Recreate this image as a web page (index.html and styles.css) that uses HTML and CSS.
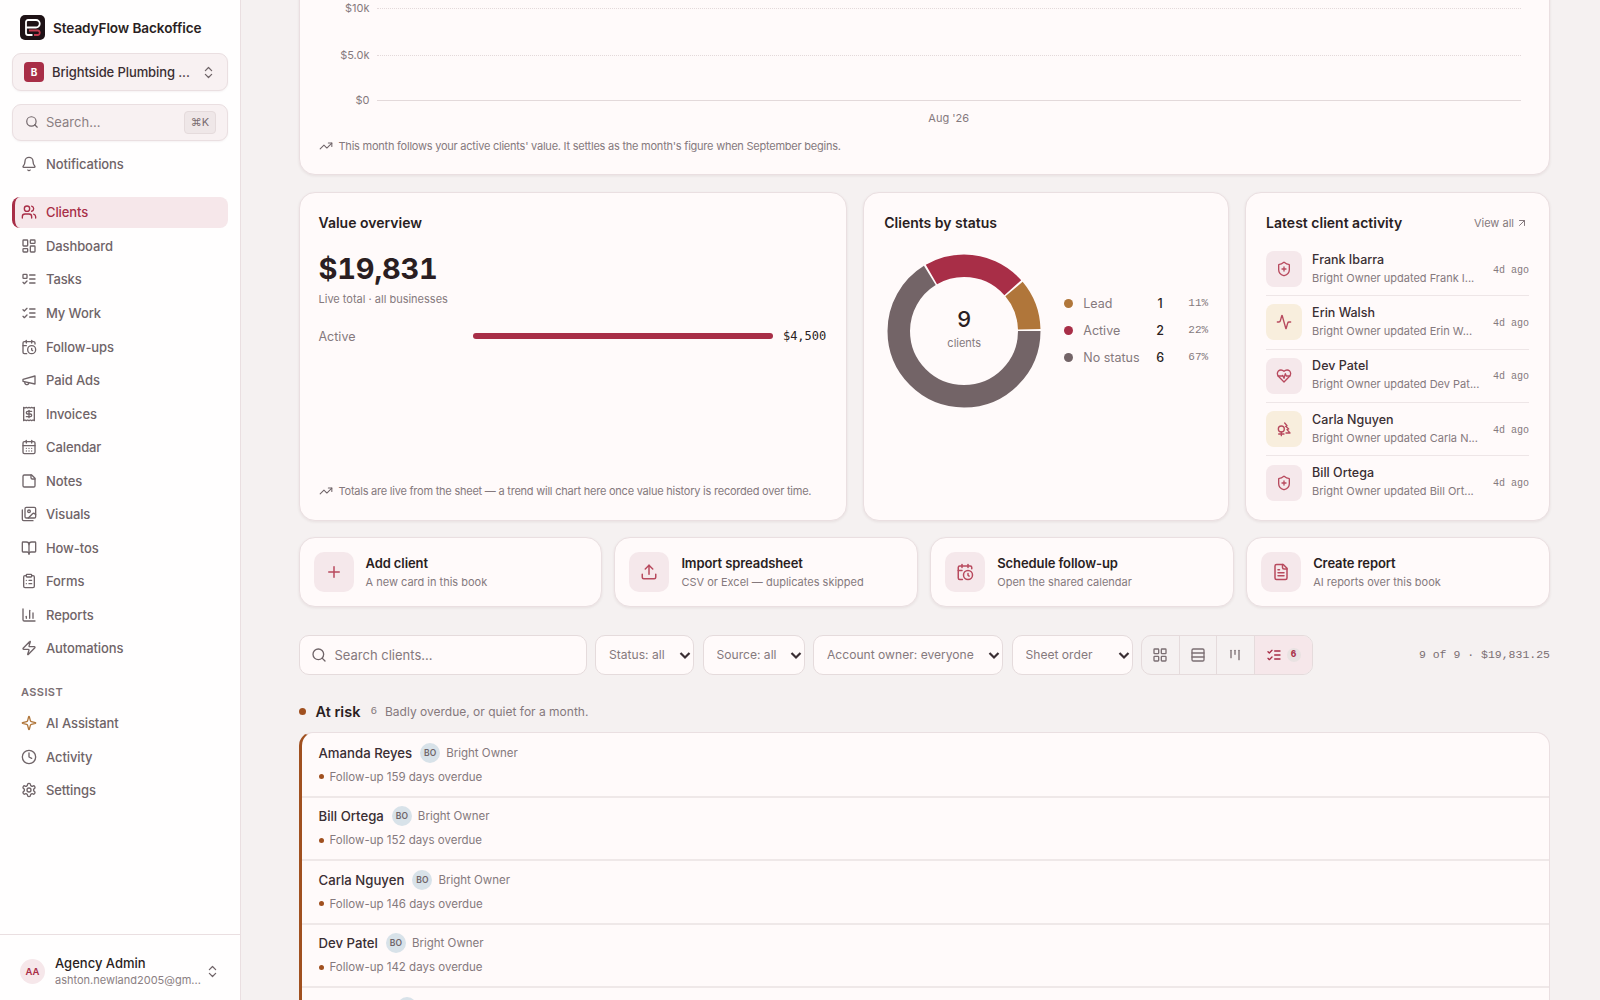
FILE: index.html
```html
<!DOCTYPE html>
<html lang="en">
<head>
    <meta charset="UTF-8">
    <meta name="viewport" content="width=device-width, initial-scale=1.0">
    <title>SteadyFlow Backoffice</title>
    <link rel="stylesheet" href="styles.css">
</head>
<body>
<svg class="sprite" xmlns="http://www.w3.org/2000/svg">
    <symbol id="i-bell" viewBox="0 0 24 24"><path d="M10.268 21a2 2 0 0 0 3.464 0"/><path d="M3.262 15.326A1 1 0 0 0 4 17h16a1 1 0 0 0 .74-1.673C19.41 13.956 18 12.499 18 8A6 6 0 0 0 6 8c0 4.499-1.411 5.956-2.738 7.326"/></symbol>
    <symbol id="i-users" viewBox="0 0 24 24"><path d="M16 21v-2a4 4 0 0 0-4-4H6a4 4 0 0 0-4 4v2"/><circle cx="9" cy="7" r="4"/><path d="M22 21v-2a4 4 0 0 0-3-3.87"/><path d="M16 3.13a4 4 0 0 1 0 7.75"/></symbol>
    <symbol id="i-dash" viewBox="0 0 24 24"><rect x="3" y="3" width="7" height="9" rx="1"/><rect x="14" y="3" width="7" height="5" rx="1"/><rect x="14" y="12" width="7" height="9" rx="1"/><rect x="3" y="16" width="7" height="5" rx="1"/></symbol>
    <symbol id="i-todo" viewBox="0 0 24 24"><rect x="3" y="5" width="6" height="6" rx="1"/><path d="m3 17 2 2 4-4"/><path d="M13 6h8"/><path d="M13 12h8"/><path d="M13 18h8"/></symbol>
    <symbol id="i-checks" viewBox="0 0 24 24"><path d="m3 17 2 2 4-4"/><path d="m3 7 2 2 4-4"/><path d="M13 6h8"/><path d="M13 12h8"/><path d="M13 18h8"/></symbol>
    <symbol id="i-calclock" viewBox="0 0 24 24"><path d="M21 7.5V6a2 2 0 0 0-2-2H5a2 2 0 0 0-2 2v14a2 2 0 0 0 2 2h3.5"/><path d="M16 2v4"/><path d="M8 2v4"/><path d="M3 10h5"/><path d="M17.5 17.5 16 16.3V14"/><circle cx="16" cy="16" r="6"/></symbol>
    <symbol id="i-mega" viewBox="0 0 24 24"><path d="m3 11 18-5v12L3 14v-3z"/><path d="M11.6 16.8a3 3 0 1 1-5.8-1.6"/></symbol>
    <symbol id="i-receipt" viewBox="0 0 24 24"><path d="M4 2v20l2-1 2 1 2-1 2 1 2-1 2 1 2-1 2 1V2l-2 1-2-1-2 1-2-1-2 1-2-1-2 1Z"/><path d="M16 8h-6a2 2 0 1 0 0 4h4a2 2 0 1 1 0 4H8"/><path d="M12 17.5v-11"/></symbol>
    <symbol id="i-cal" viewBox="0 0 24 24"><path d="M8 2v4"/><path d="M16 2v4"/><rect x="3" y="4" width="18" height="18" rx="2"/><path d="M3 10h18"/><path d="M8 14h.01"/><path d="M12 14h.01"/><path d="M16 14h.01"/><path d="M8 18h.01"/><path d="M12 18h.01"/><path d="M16 18h.01"/></symbol>
    <symbol id="i-note" viewBox="0 0 24 24"><path d="M16 3H5a2 2 0 0 0-2 2v14a2 2 0 0 0 2 2h14a2 2 0 0 0 2-2V8Z"/><path d="M15 3v4a2 2 0 0 0 2 2h4"/></symbol>
    <symbol id="i-images" viewBox="0 0 24 24"><path d="M18 22H4a2 2 0 0 1-2-2V6"/><path d="m22 13-1.296-1.296a2.41 2.41 0 0 0-3.408 0L11 18"/><circle cx="12" cy="8" r="2"/><rect x="6" y="2" width="16" height="16" rx="2"/></symbol>
    <symbol id="i-book" viewBox="0 0 24 24"><path d="M12 7v14"/><path d="M3 18a1 1 0 0 1-1-1V4a1 1 0 0 1 1-1h5a4 4 0 0 1 4 4 4 4 0 0 1 4-4h5a1 1 0 0 1 1 1v13a1 1 0 0 1-1 1h-6a3 3 0 0 0-3 3 3 3 0 0 0-3-3z"/></symbol>
    <symbol id="i-clip" viewBox="0 0 24 24"><rect x="8" y="2" width="8" height="4" rx="1"/><path d="M16 4h2a2 2 0 0 1 2 2v14a2 2 0 0 1-2 2H6a2 2 0 0 1-2-2V6a2 2 0 0 1 2-2h2"/><path d="M12 11h4"/><path d="M12 16h4"/><path d="M8 11h.01"/><path d="M8 16h.01"/></symbol>
    <symbol id="i-chart" viewBox="0 0 24 24"><path d="M3 3v16a2 2 0 0 0 2 2h16"/><path d="M18 17V9"/><path d="M13 17V5"/><path d="M8 17v-3"/></symbol>
    <symbol id="i-zap" viewBox="0 0 24 24"><path d="M4 14a1 1 0 0 1-.78-1.63l9.9-10.2a.5.5 0 0 1 .86.46l-1.92 6.02A1 1 0 0 0 13 10h7a1 1 0 0 1 .78 1.63l-9.9 10.2a.5.5 0 0 1-.86-.46l1.92-6.02A1 1 0 0 0 11 14z"/></symbol>
    <symbol id="i-spark" viewBox="0 0 24 24"><path d="M9.937 15.5A2 2 0 0 0 8.5 14.063l-6.135-1.582a.5.5 0 0 1 0-.962L8.5 9.936A2 2 0 0 0 9.937 8.5l1.582-6.135a.5.5 0 0 1 .963 0L14.063 8.5A2 2 0 0 0 15.5 9.937l6.135 1.581a.5.5 0 0 1 0 .964L15.5 14.063a2 2 0 0 0-1.437 1.437l-1.582 6.135a.5.5 0 0 1-.963 0z"/></symbol>
    <symbol id="i-clock" viewBox="0 0 24 24"><circle cx="12" cy="12" r="10"/><path d="M12 6v6l4 2"/></symbol>
    <symbol id="i-gear" viewBox="0 0 24 24"><path d="M12.22 2h-.44a2 2 0 0 0-2 2v.18a2 2 0 0 1-1 1.73l-.43.25a2 2 0 0 1-2 0l-.15-.08a2 2 0 0 0-2.73.73l-.22.38a2 2 0 0 0 .73 2.73l.15.1a2 2 0 0 1 1 1.72v.51a2 2 0 0 1-1 1.74l-.15.09a2 2 0 0 0-.73 2.73l.22.38a2 2 0 0 0 2.73.73l.15-.08a2 2 0 0 1 2 0l.43.25a2 2 0 0 1 1 1.73V20a2 2 0 0 0 2 2h.44a2 2 0 0 0 2-2v-.18a2 2 0 0 1 1-1.73l.43-.25a2 2 0 0 1 2 0l.15.08a2 2 0 0 0 2.73-.73l.22-.39a2 2 0 0 0-.73-2.73l-.15-.08a2 2 0 0 1-1-1.74v-.5a2 2 0 0 1 1-1.74l.15-.09a2 2 0 0 0 .73-2.73l-.22-.38a2 2 0 0 0-2.73-.73l-.15.08a2 2 0 0 1-2 0l-.43-.25a2 2 0 0 1-1-1.73V4a2 2 0 0 0-2-2z"/><circle cx="12" cy="12" r="3"/></symbol>
    <symbol id="i-search" viewBox="0 0 24 24"><path d="m21 21-4.34-4.34"/><circle cx="11" cy="11" r="8"/></symbol>
    <symbol id="i-updown" viewBox="0 0 24 24"><path d="m7 15 5 5 5-5"/><path d="m7 9 5-5 5 5"/></symbol>
    <symbol id="i-trend" viewBox="0 0 24 24"><path d="M16 7h6v6"/><path d="m22 7-8.5 8.5-5-5L2 17"/></symbol>
    <symbol id="i-out" viewBox="0 0 24 24"><path d="M7 7h10v10"/><path d="M7 17 17 7"/></symbol>
    <symbol id="i-shield" viewBox="0 0 24 24"><path d="M20 13c0 5-3.5 7.5-7.66 8.95a1 1 0 0 1-.67-.01C7.5 20.5 4 18 4 13V6a1 1 0 0 1 1-1c2 0 4.5-1.2 6.24-2.72a1.17 1.17 0 0 1 1.52 0C14.51 3.81 17 5 19 5a1 1 0 0 1 1 1z"/><path d="M9 12h6"/><path d="M12 9v6"/></symbol>
    <symbol id="i-pulse" viewBox="0 0 24 24"><path d="M22 12h-2.48a2 2 0 0 0-1.93 1.46l-2.35 8.36a.25.25 0 0 1-.48 0L9.24 2.18a.25.25 0 0 0-.48 0l-2.35 8.36A2 2 0 0 1 4.49 12H2"/></symbol>
    <symbol id="i-heart" viewBox="0 0 24 24"><path d="M19 14c1.49-1.46 3-3.21 3-5.5A5.5 5.5 0 0 0 16.5 3c-1.76 0-3 .5-4.5 2-1.5-1.5-2.74-2-4.5-2A5.5 5.5 0 0 0 2 8.5c0 2.3 1.5 4.05 3 5.5l7 7Z"/><path d="M3.22 12H9.5l.5-1 2 4.5 2-7 1.5 3.5h5.27"/></symbol>
    <symbol id="i-trees" viewBox="0 0 24 24"><circle cx="8" cy="12" r="4.5"/><path d="M8 16.5V22"/><path d="M4 19.5h8"/><path d="M13 3l3.5 4-2 1 4.5 4-2.5 1 4.5 5h-6"/></symbol>
    <symbol id="i-plus" viewBox="0 0 24 24"><path d="M5 12h14"/><path d="M12 5v14"/></symbol>
    <symbol id="i-upload" viewBox="0 0 24 24"><path d="M12 3v12"/><path d="m17 8-5-5-5 5"/><path d="M21 15v4a2 2 0 0 1-2 2H5a2 2 0 0 1-2-2v-4"/></symbol>
    <symbol id="i-file" viewBox="0 0 24 24"><path d="M15 2H6a2 2 0 0 0-2 2v16a2 2 0 0 0 2 2h12a2 2 0 0 0 2-2V7Z"/><path d="M14 2v4a2 2 0 0 0 2 2h4"/><path d="M10 9H8"/><path d="M16 13H8"/><path d="M16 17H8"/></symbol>
    <symbol id="i-grid" viewBox="0 0 24 24"><rect x="3" y="3" width="7" height="7" rx="1"/><rect x="14" y="3" width="7" height="7" rx="1"/><rect x="14" y="14" width="7" height="7" rx="1"/><rect x="3" y="14" width="7" height="7" rx="1"/></symbol>
    <symbol id="i-rows" viewBox="0 0 24 24"><rect x="3" y="3" width="18" height="18" rx="2"/><path d="M21 9H3"/><path d="M21 15H3"/></symbol>
    <symbol id="i-kanban" viewBox="0 0 24 24"><path d="M6 5v11"/><path d="M12 5v6"/><path d="M18 5v14"/></symbol>
</svg>

<div class="app">
    <aside class="sidebar">
        <div class="brand">
            <svg class="brand_logo" viewBox="0 0 25 25">
                <rect width="25" height="25" rx="5" fill="#1e1216"/>
                <path d="M6 12.5V7a2 2 0 0 1 2-2h8a3.2 3.2 0 0 1 0 7.5H6v5.5a2 2 0 0 0 2 2h4.5" fill="none" stroke="#fff" stroke-width="1.8"/>
                <path d="M9 15.5h9a2.3 2.3 0 0 1 0 4.5h-4" fill="none" stroke="#c23a4e" stroke-width="1.8"/>
            </svg>
            <span class="brand_name">SteadyFlow Backoffice</span>
        </div>
        <div class="switcher">
            <span class="switcher_badge">B</span>
            <span class="switcher_name">Brightside Plumbing ...</span>
            <svg class="ico ico_sm"><use href="#i-updown"/></svg>
        </div>
        <div class="side_search">
            <svg class="ico"><use href="#i-search"/></svg>
            <span class="side_search_text">Search...</span>
            <span class="kbd">⌘K</span>
        </div>
        <a class="nav_item nav_solo"><svg class="ico"><use href="#i-bell"/></svg>Notifications</a>

        <nav class="nav">
            <a class="nav_item active"><svg class="ico"><use href="#i-users"/></svg>Clients</a>
            <a class="nav_item"><svg class="ico"><use href="#i-dash"/></svg>Dashboard</a>
            <a class="nav_item"><svg class="ico"><use href="#i-todo"/></svg>Tasks</a>
            <a class="nav_item"><svg class="ico"><use href="#i-checks"/></svg>My Work</a>
            <a class="nav_item"><svg class="ico"><use href="#i-calclock"/></svg>Follow-ups</a>
            <a class="nav_item"><svg class="ico"><use href="#i-mega"/></svg>Paid Ads</a>
            <a class="nav_item"><svg class="ico"><use href="#i-receipt"/></svg>Invoices</a>
            <a class="nav_item"><svg class="ico"><use href="#i-cal"/></svg>Calendar</a>
            <a class="nav_item"><svg class="ico"><use href="#i-note"/></svg>Notes</a>
            <a class="nav_item"><svg class="ico"><use href="#i-images"/></svg>Visuals</a>
            <a class="nav_item"><svg class="ico"><use href="#i-book"/></svg>How-tos</a>
            <a class="nav_item"><svg class="ico"><use href="#i-clip"/></svg>Forms</a>
            <a class="nav_item"><svg class="ico"><use href="#i-chart"/></svg>Reports</a>
            <a class="nav_item"><svg class="ico"><use href="#i-zap"/></svg>Automations</a>
        </nav>

        <div class="nav_label">ASSIST</div>
        <nav class="nav">
            <a class="nav_item"><svg class="ico ico_orange"><use href="#i-spark"/></svg>AI Assistant</a>
            <a class="nav_item"><svg class="ico"><use href="#i-clock"/></svg>Activity</a>
            <a class="nav_item"><svg class="ico"><use href="#i-gear"/></svg>Settings</a>
        </nav>

        <div class="side_user">
            <span class="side_user_avatar">AA</span>
            <div class="side_user_text">
                <div class="side_user_name">Agency Admin</div>
                <div class="side_user_mail">ashton.newland2005@gm...</div>
            </div>
            <svg class="ico ico_sm"><use href="#i-updown"/></svg>
        </div>
    </aside>

    <main class="main">
        <!-- page is scrolled down a little, so the chart card starts above the window -->
        <section class="card chart_card">
            <div class="chart_row chart_row_first"><span class="chart_tick">$10k</span><span class="chart_line"></span></div>
            <div class="chart_row"><span class="chart_tick">$5.0k</span><span class="chart_line"></span></div>
            <div class="chart_row chart_row_last"><span class="chart_tick">$0</span><span class="chart_line chart_base"></span></div>
            <div class="chart_month">Aug '26</div>
            <div class="note"><svg class="ico note_ico"><use href="#i-trend"/></svg>This month follows your active clients' value. It settles as the month's figure when September begins.</div>
        </section>

        <section class="overview">
            <div class="card value_card">
                <h3 class="card_title">Value overview</h3>
                <div class="value_big">$19,831</div>
                <div class="value_sub">Live total · all businesses</div>
                <div class="value_row">
                    <span class="value_label">Active</span>
                    <span class="value_bar"></span>
                    <span class="value_amount">$4,500</span>
                </div>
                <div class="note note_bottom"><svg class="ico note_ico"><use href="#i-trend"/></svg>Totals are live from the sheet — a trend will chart here once value history is recorded over time.</div>
            </div>

            <div class="card status_card">
                <h3 class="card_title">Clients by status</h3>
                <div class="status_body">
                    <div class="donut">
                        <svg class="donut_svg" viewBox="0 0 160 160">
                            <circle class="seg seg_gray" cx="80" cy="80" r="65.25" pathLength="360" stroke-dasharray="238.4 121.6" stroke-dashoffset="0"/>
                            <circle class="seg seg_red" cx="80" cy="80" r="65.25" pathLength="360" stroke-dasharray="78.4 281.6" stroke-dashoffset="-240"/>
                            <circle class="seg seg_orange" cx="80" cy="80" r="65.25" pathLength="360" stroke-dasharray="38.4 321.6" stroke-dashoffset="-320"/>
                        </svg>
                        <div class="donut_center">
                            <div class="donut_num">9</div>
                            <div class="donut_label">clients</div>
                        </div>
                    </div>
                    <div class="legend">
                        <span class="legend_dot dot_orange"></span><span class="legend_name">Lead</span><span class="legend_count">1</span><span class="legend_pct">11%</span>
                        <span class="legend_dot dot_red"></span><span class="legend_name">Active</span><span class="legend_count">2</span><span class="legend_pct">22%</span>
                        <span class="legend_dot dot_gray"></span><span class="legend_name">No status</span><span class="legend_count">6</span><span class="legend_pct">67%</span>
                    </div>
                </div>
            </div>

            <div class="card activity_card">
                <div class="activity_head">
                    <h3 class="card_title">Latest client activity</h3>
                    <a class="view_all">View all<svg class="ico view_all_ico"><use href="#i-out"/></svg></a>
                </div>
                <div class="activity_row">
                    <span class="activity_icon"><svg class="ico"><use href="#i-shield"/></svg></span>
                    <div class="activity_text"><div class="activity_name">Frank Ibarra</div><div class="activity_sub">Bright Owner updated Frank I...</div></div>
                    <span class="activity_time">4d ago</span>
                </div>
                <div class="activity_row">
                    <span class="activity_icon icon_cream"><svg class="ico"><use href="#i-pulse"/></svg></span>
                    <div class="activity_text"><div class="activity_name">Erin Walsh</div><div class="activity_sub">Bright Owner updated Erin W...</div></div>
                    <span class="activity_time">4d ago</span>
                </div>
                <div class="activity_row">
                    <span class="activity_icon"><svg class="ico"><use href="#i-heart"/></svg></span>
                    <div class="activity_text"><div class="activity_name">Dev Patel</div><div class="activity_sub">Bright Owner updated Dev Pat...</div></div>
                    <span class="activity_time">4d ago</span>
                </div>
                <div class="activity_row">
                    <span class="activity_icon icon_cream"><svg class="ico"><use href="#i-trees"/></svg></span>
                    <div class="activity_text"><div class="activity_name">Carla Nguyen</div><div class="activity_sub">Bright Owner updated Carla N...</div></div>
                    <span class="activity_time">4d ago</span>
                </div>
                <div class="activity_row">
                    <span class="activity_icon"><svg class="ico"><use href="#i-shield"/></svg></span>
                    <div class="activity_text"><div class="activity_name">Bill Ortega</div><div class="activity_sub">Bright Owner updated Bill Ort...</div></div>
                    <span class="activity_time">4d ago</span>
                </div>
            </div>
        </section>

        <section class="actions">
            <a class="card action"><span class="action_icon"><svg class="ico"><use href="#i-plus"/></svg></span><div><div class="action_title">Add client</div><div class="action_sub">A new card in this book</div></div></a>
            <a class="card action"><span class="action_icon"><svg class="ico"><use href="#i-upload"/></svg></span><div><div class="action_title">Import spreadsheet</div><div class="action_sub">CSV or Excel — duplicates skipped</div></div></a>
            <a class="card action"><span class="action_icon"><svg class="ico"><use href="#i-calclock"/></svg></span><div><div class="action_title">Schedule follow-up</div><div class="action_sub">Open the shared calendar</div></div></a>
            <a class="card action"><span class="action_icon"><svg class="ico"><use href="#i-file"/></svg></span><div><div class="action_title">Create report</div><div class="action_sub">AI reports over this book</div></div></a>
        </section>

        <section class="toolbar">
            <div class="client_search">
                <svg class="ico"><use href="#i-search"/></svg>
                <span>Search clients...</span>
            </div>
            <select class="pick pick_status"><option>Status: all</option></select>
            <select class="pick pick_source"><option>Source: all</option></select>
            <select class="pick pick_owner"><option>Account owner: everyone</option></select>
            <select class="pick pick_order"><option>Sheet order</option></select>
            <div class="views">
                <a class="view"><svg class="ico"><use href="#i-grid"/></svg></a>
                <a class="view"><svg class="ico"><use href="#i-rows"/></svg></a>
                <a class="view"><svg class="ico"><use href="#i-kanban"/></svg></a>
                <a class="view view_on"><svg class="ico"><use href="#i-checks"/></svg><span class="view_badge">6</span></a>
            </div>
            <span class="count">9 of 9 · $19,831.25</span>
        </section>

        <section>
            <div class="group_head">
                <span class="group_dot"></span>
                <span class="group_name">At risk</span>
                <span class="group_count">6</span>
                <span class="group_desc">Badly overdue, or quiet for a month.</span>
            </div>
            <div class="client_list">
                <div class="client"><div class="client_top"><span class="client_name">Amanda Reyes</span><span class="avatar">BO</span><span class="client_owner">Bright Owner</span></div><div class="client_flag"><span class="flag_dot"></span>Follow-up 159 days overdue</div></div>
                <div class="client"><div class="client_top"><span class="client_name">Bill Ortega</span><span class="avatar">BO</span><span class="client_owner">Bright Owner</span></div><div class="client_flag"><span class="flag_dot"></span>Follow-up 152 days overdue</div></div>
                <div class="client"><div class="client_top"><span class="client_name">Carla Nguyen</span><span class="avatar">BO</span><span class="client_owner">Bright Owner</span></div><div class="client_flag"><span class="flag_dot"></span>Follow-up 146 days overdue</div></div>
                <div class="client"><div class="client_top"><span class="client_name">Dev Patel</span><span class="avatar">BO</span><span class="client_owner">Bright Owner</span></div><div class="client_flag"><span class="flag_dot"></span>Follow-up 142 days overdue</div></div>
                <!-- next row only shows the top of its avatar above the fold -->
                <div class="client"><div class="client_top"><span class="client_hidden"></span><span class="avatar"></span></div></div>
            </div>
        </section>
    </main>
</div>
</body>
</html>
```

FILE: styles.css
```css
* {
    box-sizing: border-box;
}
html, body {
    margin: 0;
    height: 1000px;
    overflow: hidden;
}
body {
    font-family: Inter, "Noto Sans", sans-serif;
    color: #2a1e22;
    background: #f5f1f1;
}
.sprite {
    display: none;
}
.app {
    display: flex;
    height: 1000px;
    overflow: hidden;
}
.ico {
    width: 16px;
    height: 16px;
    flex: none;
    fill: none;
    stroke: currentColor;
    stroke-width: 2;
    stroke-linecap: round;
    stroke-linejoin: round;
}
.ico_sm {
    width: 15px;
    height: 15px;
}
.ico_orange {
    color: #b0763a;
}

/* sidebar */
.sidebar {
    width: 241px;
    flex: none;
    display: flex;
    flex-direction: column;
    padding: 15px 12px 0;
    background: #fffefe;
    border-right: 1px solid #eadfe1;
    color: #6f6468;
}
.brand {
    display: flex;
    align-items: center;
    gap: 8px;
    height: 25px;
    padding-left: 8px;
}
.brand_logo {
    width: 25px;
    height: 25px;
    flex: none;
}
.brand_name {
    font-size: 13.6px;
    font-weight: 600;
    color: #2a1e22;
    letter-spacing: -0.1px;
}
.switcher {
    display: flex;
    align-items: center;
    height: 38px;
    margin-top: 13px;
    padding: 0 11px 0 11px;
    background: #f8f1f2;
    border: 1px solid #eadfe1;
    border-radius: 9px;
    box-shadow: 0 1px 2px rgba(60, 20, 30, 0.05);
}
.switcher_badge {
    width: 20px;
    height: 20px;
    flex: none;
    display: flex;
    justify-content: center;
    align-items: center;
    border-radius: 4px;
    background: #a82e47;
    color: #fff;
    font-size: 10px;
    font-weight: 700;
}
.switcher_name {
    flex: 1;
    min-width: 0;
    margin: 0 12px 0 8px;
    white-space: nowrap;
    font-size: 13px;
    font-weight: 500;
    letter-spacing: -0.1px;
    color: #3a2e33;
}
.side_search {
    display: flex;
    align-items: center;
    gap: 7px;
    height: 37px;
    margin-top: 13px;
    padding: 0 11px 1px 12px;
    background: #f8f1f2;
    border: 1px solid #eadfe1;
    border-radius: 9px;
    box-shadow: 0 1px 2px rgba(60, 20, 30, 0.05);
}
.side_search .ico {
    width: 14px;
    height: 14px;
}
.side_search_text {
    flex: 1;
    font-size: 13px;
    color: #8b7f83;
}
.kbd {
    width: 32px;
    height: 23px;
    display: flex;
    justify-content: center;
    align-items: center;
    background: #efe7e8;
    border: 1px solid #e5dbdc;
    border-radius: 4px;
    font-size: 11px;
    color: #7a6d71;
}
.nav_item {
    display: flex;
    align-items: center;
    gap: 9px;
    height: 31.55px;
    padding-left: 9px;
    border-radius: 8px;
    font-size: 13px;
    font-weight: 500;
    letter-spacing: -0.1px;
    color: #6f6468;
}
.nav_solo {
    margin-top: 7px;
    margin-bottom: 17px;
}
.nav {
    display: flex;
    flex-direction: column;
    gap: 2px;
}
.nav_item.active {
    padding-left: 6px;
    background: #f6e7ea;
    border-left: 3px solid #a82e47;
    color: #a82e47;
}
.nav_label {
    margin: 21px 0 8px 9px;
    line-height: 14px;
    font-size: 11px;
    font-weight: 600;
    letter-spacing: 0.4px;
    color: #7b6f73;
}
.side_user {
    margin: auto -12px 0;
    height: 66px;
    display: flex;
    align-items: center;
    padding: 7px 20px 0 20px;
    border-top: 1px solid #eadfe1;
}
.side_user_avatar {
    width: 25px;
    height: 25px;
    flex: none;
    display: flex;
    justify-content: center;
    align-items: center;
    border-radius: 50%;
    background: #f6e7ea;
    color: #a82e47;
    font-size: 9.5px;
    font-weight: 600;
}
.side_user_text {
    flex: 1;
    min-width: 0;
    margin: 0 10px;
}
.side_user_name {
    font-size: 13px;
    font-weight: 500;
    color: #2a1e22;
}
.side_user_mail {
    margin-top: 2px;
    white-space: nowrap;
    font-size: 11px;
    color: #8b7f83;
}

/* main column */
.main {
    flex: 1;
    min-width: 0;
    display: flex;
    flex-direction: column;
    gap: 17px;
    margin-top: -40px;
    padding: 0 50px 0 57.5px;
}
.card {
    background: #fffafa;
    border: 1px solid #eadfe1;
    border-radius: 16px;
    box-shadow: 0 1px 3px rgba(60, 20, 30, 0.08);
}
.card_title {
    margin: 0;
    line-height: 20px;
    font-size: 14px;
    font-weight: 600;
    color: #2a1e22;
}
.note {
    display: flex;
    align-items: center;
    gap: 6px;
    line-height: 14px;
    font-size: 11px;
    letter-spacing: -0.23px;
    color: #85797d;
}
.note_ico {
    width: 14px;
    height: 14px;
    stroke-width: 1.8;
    color: #6f6468;
}
.chart_card {
    padding: 40px 28px 21px 19px;
    flex: none;
}
.chart_row {
    display: flex;
    height: 46px;
}
.chart_row_first {
    height: 47px;
}
.chart_row_last {
    height: 18px;
    margin-top: -1px;
}
.chart_tick {
    width: 51px;
    line-height: 14px;
    text-align: right;
    font-size: 11px;
    color: #85797d;
}
.chart_line {
    flex: 1;
    height: 0;
    margin: 7px 0 0 7px;
    border-top: 1px dotted #e3d9da;
}
.chart_base {
    border-top: 1px solid #e3d9da;
}
.chart_month {
    line-height: 14px;
    margin-left: 58px;
    text-align: center;
    font-size: 11px;
    color: #85797d;
}
.chart_card .note {
    margin-top: 14px;
}

.overview {
    display: grid;
    grid-template-columns: minmax(0, 1.8fr) minmax(0, 1.2fr) minmax(0, 1fr);
    gap: 16px;
    height: 328.5px;
    flex: none;
}
.value_card {
    display: flex;
    flex-direction: column;
    padding: 20px 20px 22px 19px;
}
.value_big {
    margin-top: 16px;
    line-height: 40px;
    font-size: 29px;
    font-weight: 700;
    letter-spacing: -0.2px;
    font-feature-settings: "tnum";
    color: #2a1e22;
}
.value_sub {
    margin-top: 2px;
    line-height: 16px;
    font-size: 11px;
    color: #85797d;
}
.value_row {
    display: flex;
    align-items: center;
    margin-top: 20px;
    height: 18px;
}
.value_label {
    width: 154px;
    font-size: 12.5px;
    color: #85797d;
}
.value_bar {
    flex: 1;
    height: 6px;
    border-radius: 3px;
    background: #a82e47;
}
.value_amount {
    margin-left: 10px;
    font-family: "DejaVu Sans Mono", monospace;
    font-size: 12px;
    color: #2a1e22;
}
.note_bottom {
    margin-top: auto;
}

.status_card {
    padding: 20px 20px 20px;
}
.status_body {
    display: flex;
    align-items: center;
    gap: 20px;
    margin-top: 17.5px;
}
.donut {
    width: 160px;
    height: 160px;
    flex: none;
    display: grid;
    place-items: center;
}
.donut > * {
    grid-area: 1 / 1;
}
.donut_svg {
    width: 160px;
    height: 160px;
}
.seg {
    fill: none;
    stroke-width: 22.5;
}
.seg_gray {
    stroke: #736467;
}
.seg_red {
    stroke: #a82e47;
}
.seg_orange {
    stroke: #b0763a;
}
.donut_center {
    margin-bottom: 5px;
    text-align: center;
}
.donut_num {
    line-height: 26px;
    font-size: 22px;
    font-weight: 500;
    color: #2a1e22;
}
.donut_label {
    margin-top: 4px;
    font-size: 11px;
    color: #85797d;
}
.legend {
    flex: 1;
    display: grid;
    grid-template-columns: 19px 1fr 20px 38px;
    align-items: center;
    row-gap: 10px;
    line-height: 17px;
    margin-top: -1px;
}
.legend_dot {
    width: 9px;
    height: 9px;
    border-radius: 50%;
}
.dot_orange {
    background: #b0763a;
}
.dot_red {
    background: #a82e47;
}
.dot_gray {
    background: #736467;
}
.legend_name {
    white-space: nowrap;
    font-size: 12.5px;
    color: #85797d;
}
.legend_count {
    text-align: center;
    font-size: 12.5px;
    font-weight: 500;
    color: #2a1e22;
}
.legend_pct {
    text-align: right;
    font-family: "Liberation Mono", monospace;
    font-size: 11px;
    color: #85797d;
}

.activity_card {
    padding: 20px 20px 0;
}
.activity_head {
    display: flex;
    align-items: center;
    justify-content: space-between;
    margin-bottom: 10px;
}
.view_all {
    display: flex;
    align-items: center;
    gap: 2px;
    padding-right: 1px;
    font-size: 11px;
    color: #85797d;
}
.view_all_ico {
    width: 12px;
    height: 12px;
}
.activity_row {
    display: flex;
    align-items: center;
    height: 53.3px;
    border-bottom: 1px solid #eee6e7;
}
.activity_row:last-child {
    border-bottom: 0;
}
.activity_icon {
    width: 36px;
    height: 36px;
    flex: none;
    display: flex;
    justify-content: center;
    align-items: center;
    border-radius: 8px;
    background: #f5e8eb;
    color: #b84a5e;
}
.icon_cream {
    background: #f8eedd;
}
.activity_text {
    flex: 1;
    min-width: 0;
    margin: 0 0 2px 10px;
}
.activity_name {
    line-height: 17px;
    font-size: 12.5px;
    font-weight: 500;
    color: #3a2e33;
}
.activity_sub {
    margin-top: 3px;
    line-height: 15px;
    white-space: nowrap;
    font-size: 11px;
    color: #85797d;
}
.activity_time {
    flex: none;
    margin: 2px 0 0 10px;
    font-family: "Liberation Mono", monospace;
    font-size: 10px;
    color: #85797d;
}

.actions {
    display: grid;
    grid-template-columns: repeat(4, minmax(0, 1fr));
    gap: 12px;
    margin-top: -1px;
    flex: none;
}
.action {
    display: flex;
    align-items: center;
    gap: 12px;
    height: 70px;
    padding: 0 14px;
}
.action_icon {
    width: 40px;
    height: 40px;
    flex: none;
    display: flex;
    justify-content: center;
    align-items: center;
    border-radius: 10px;
    background: #f5e8eb;
    color: #b84a5e;
}
.action_icon .ico {
    width: 18px;
    height: 18px;
}
.action_title {
    line-height: 18px;
    font-size: 13px;
    font-weight: 600;
    letter-spacing: -0.1px;
    color: #2a1e22;
}
.action_sub {
    margin-top: 2px;
    line-height: 16px;
    font-size: 11px;
    color: #85797d;
}

.toolbar {
    display: flex;
    align-items: center;
    gap: 8.5px;
    margin-top: 11px;
    height: 40px;
    flex: none;
}
.client_search {
    width: 288px;
    height: 40px;
    display: flex;
    align-items: center;
    gap: 8px;
    padding-left: 11px;
    background: #fffafa;
    border: 1px solid #e5dbdc;
    border-radius: 10px;
    font-size: 13px;
    color: #85797d;
}
.client_search .ico {
    color: #6f6468;
}
.pick {
    height: 40px;
    padding: 0 0 0 13px;
    appearance: none;
    background-color: #fffafa;
    background-image: url("data:image/svg+xml;utf8,<svg xmlns='http://www.w3.org/2000/svg' viewBox='0 0 12 12'><path d='M1.5 4l4.5 4.5L10.5 4' fill='none' stroke='%233a2e33' stroke-width='2.2'/></svg>");
    background-repeat: no-repeat;
    background-position: right 2px center;
    background-size: 12px 12px;
    border: 1px solid #e5dbdc;
    border-radius: 10px;
    font-family: inherit;
    font-size: 12.1px;
    color: #85797d;
    outline: none;
}
.pick_status {
    width: 99px;
}
.pick_source {
    width: 102px;
}
.pick_owner {
    width: 190px;
}
.pick_order {
    width: 121px;
}
.views {
    display: flex;
    height: 40px;
    overflow: hidden;
    border: 1px solid #e5dbdc;
    border-radius: 10px;
}
.view {
    width: 37.5px;
    display: flex;
    justify-content: center;
    align-items: center;
    border-right: 1px solid #e5dbdc;
    color: #7b6f73;
}
.view_on {
    width: 57px;
    gap: 5px;
    border-right: 0;
    background: #f6e7ea;
    color: #a82e47;
}
.view_badge {
    width: 14px;
    height: 14px;
    display: flex;
    justify-content: center;
    align-items: center;
    border-radius: 50%;
    background: #e9e2e2;
    font-family: "Liberation Mono", monospace;
    font-size: 10px;
    font-weight: 700;
}
.count {
    margin-left: auto;
    font-family: "Liberation Mono", monospace;
    font-size: 11.5px;
    color: #7b6f73;
}

.group_head {
    display: flex;
    align-items: center;
    height: 20px;
    margin-top: 9.5px;
}
.group_dot {
    width: 7px;
    height: 7px;
    border-radius: 50%;
    background: #a0501f;
}
.group_name {
    margin-left: 10px;
    font-size: 14.5px;
    font-weight: 600;
    color: #2a1e22;
}
.group_count {
    margin-left: 10px;
    font-family: "Liberation Mono", monospace;
    font-size: 11px;
    color: #85797d;
}
.group_desc {
    margin-left: 8px;
    font-size: 12px;
    color: #85797d;
}
.client_list {
    margin-top: 10.5px;
    background: #fffafa;
    border: 1px solid #eadfe1;
    border-left: 3px solid #a0501f;
    border-radius: 14px 14px 0 0;
}
.client {
    height: 63.6px;
    padding: 7.5px 0 0 17px;
    border-bottom: 2px solid #efe8e8;
}
.client:first-child {
    height: 65.1px;
    padding-top: 9px;
}
.client_top {
    display: flex;
    align-items: center;
    height: 22px;
}
.client_name {
    font-size: 13.2px;
    font-weight: 500;
    color: #3a2e33;
}
.client_hidden {
    width: 70px;
}
.avatar {
    width: 20px;
    height: 20px;
    display: flex;
    justify-content: center;
    align-items: center;
    margin: 0 6px 0 8px;
    border-radius: 50%;
    background: #d8e2e9;
    font-size: 8.5px;
    font-weight: 600;
    color: #6f6468;
}
.client_owner {
    font-size: 11.5px;
    color: #85797d;
}
.client_flag {
    display: flex;
    align-items: center;
    margin-top: 3px;
    height: 20px;
    font-size: 11.5px;
    color: #85797d;
}
.flag_dot {
    width: 5px;
    height: 5px;
    margin-right: 6px;
    border-radius: 50%;
    background: #a0501f;
}
```
